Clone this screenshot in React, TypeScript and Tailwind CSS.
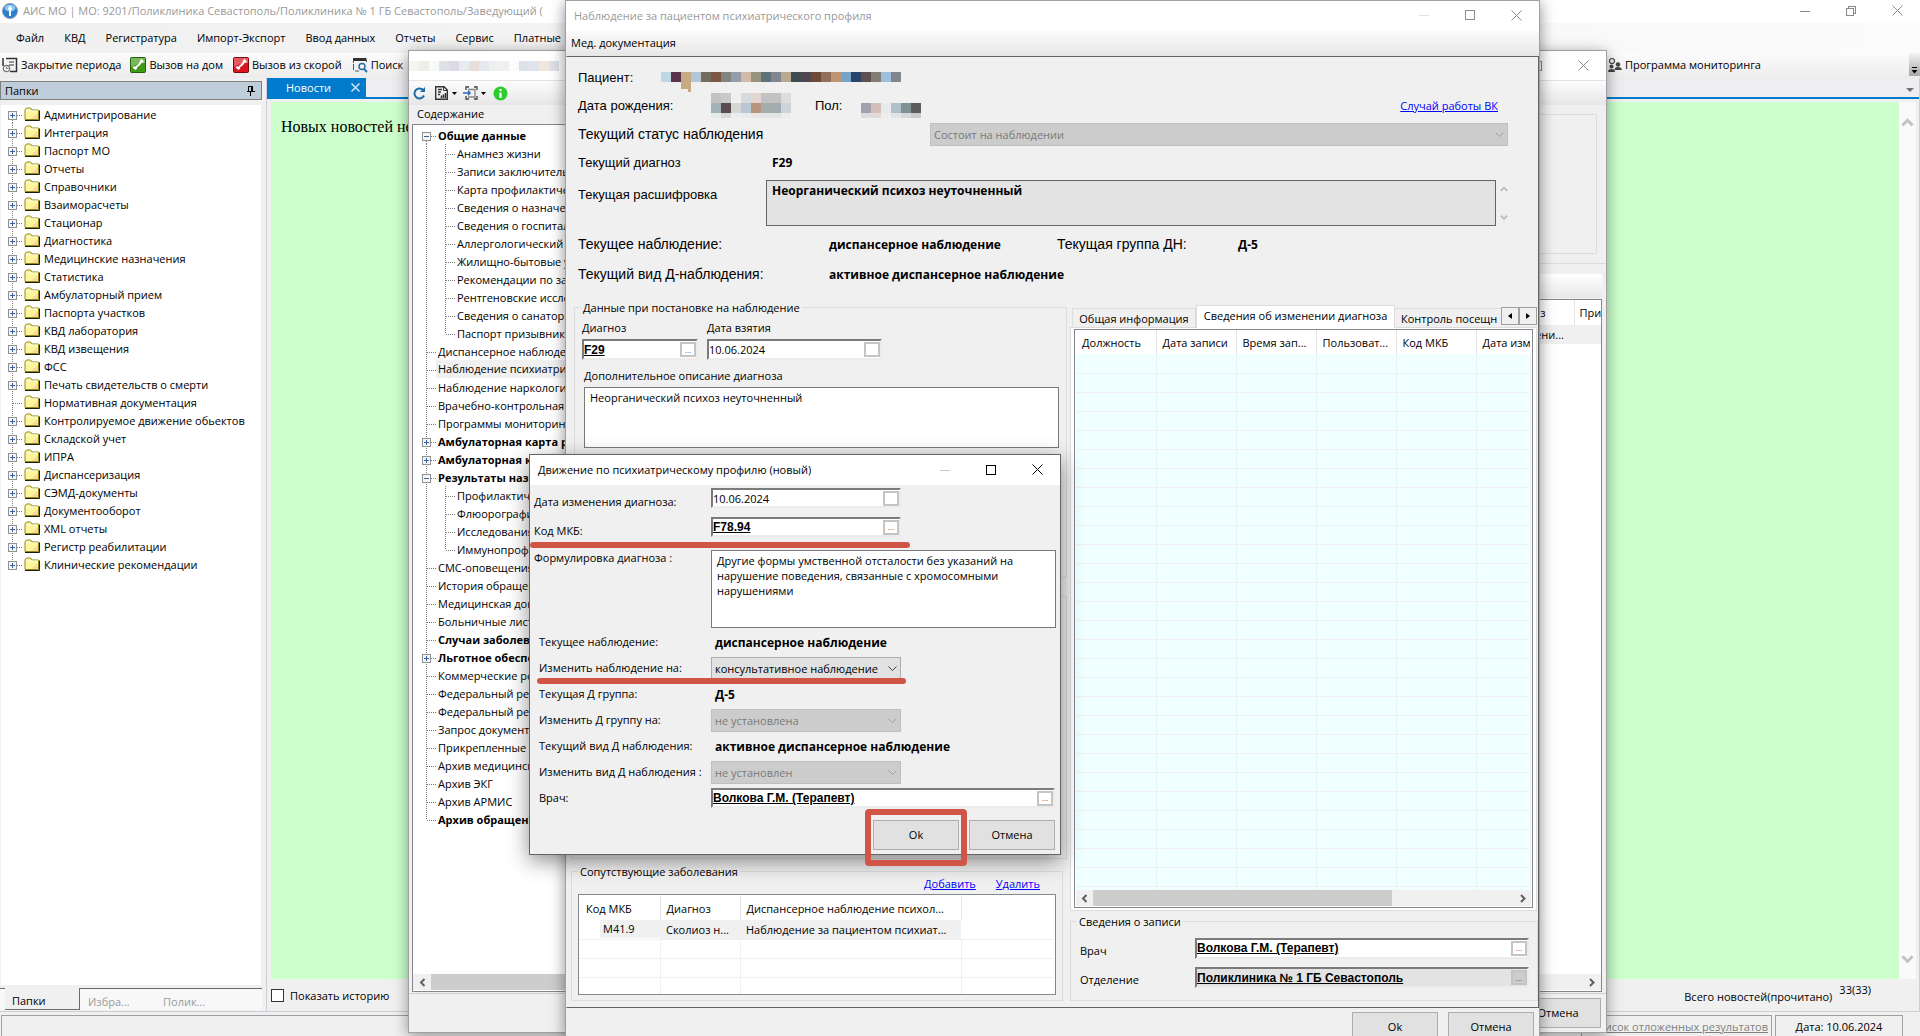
import type { ReactNode } from "react";
import clsx from "clsx";

const FOLDERS = [
  "Администрирование",
  "Интеграция",
  "Паспорт МО",
  "Отчеты",
  "Справочники",
  "Взаиморасчеты",
  "Стационар",
  "Диагностика",
  "Медицинские назначения",
  "Статистика",
  "Амбулаторный прием",
  "Паспорта участков",
  "КВД лаборатория",
  "КВД извещения",
  "ФСС",
  "Печать свидетельств о смерти",
  "Нормативная документация",
  "Контролируемое движение обьектов",
  "Складской учет",
  "ИПРА",
  "Диспансеризация",
  "СЭМД-документы",
  "Документооборот",
  "XML отчеты",
  "Регистр реабилитации",
  "Клинические рекомендации",
];

type Node = { label: string; bold?: boolean; box?: "plus" | "minus"; selected?: boolean; children?: string[] };

const CONTENTS: Node[] = [
  {
    label: "Общие данные",
    bold: true,
    box: "minus",
    children: [
      "Анамнез жизни",
      "Записи заключительных",
      "Карта профилактических",
      "Сведения о назначениях",
      "Сведения о госпитализации",
      "Аллергологический анамнез",
      "Жилищно-бытовые условия",
      "Рекомендации по занятиям",
      "Рентгеновские исследования",
      "Сведения о санаторном",
      "Паспорт призывника",
    ],
  },
  { label: "Диспансерное наблюдение" },
  { label: "Наблюдение психиатрическое", selected: true },
  { label: "Наблюдение наркологическое" },
  { label: "Врачебно-контрольная карта" },
  { label: "Программы мониторинга" },
  { label: "Амбулаторная карта ребенка", bold: true, box: "plus" },
  { label: "Амбулаторная карта", bold: true, box: "plus" },
  {
    label: "Результаты назначений",
    bold: true,
    box: "minus",
    children: ["Профилактические", "Флюорография", "Исследования", "Иммунопрофилактика"],
  },
  { label: "СМС-оповещения" },
  { label: "История обращений" },
  { label: "Медицинская документация" },
  { label: "Больничные листы" },
  { label: "Случаи заболеваний", bold: true },
  { label: "Льготное обеспечение", bold: true, box: "plus" },
  { label: "Коммерческие реестры" },
  { label: "Федеральный регистр" },
  { label: "Федеральный регистр" },
  { label: "Запрос документов" },
  { label: "Прикрепленные файлы" },
  { label: "Архив медицинский" },
  { label: "Архив ЭКГ" },
  { label: "Архив АРМИС" },
  { label: "Архив обращений", bold: true },
];

const NAME_CELLS = [
  "bg-[#bfd6e4]", "bg-[#58344c]", "bg-[#c7a984]", "bg-[#b3c5d6]", "bg-[#756c60]", "bg-[#7c5543]",
  "bg-[#80857d]", "bg-[#949eaa]", "bg-[#d3b9a7]", "bg-[#97937d]", "bg-[#5f7279]", "bg-[#81858f]",
  "bg-[#b9a993]", "bg-[#3f4c52]", "bg-[#524750]", "bg-[#6e4938]", "bg-[#90705a]", "bg-[#bd9672]",
  "bg-[#76a3c7]", "bg-[#27456a]", "bg-[#5f4d50]", "bg-[#827d74]", "bg-[#a0bfdf]", "bg-[#81858f]",
];
const BIRTH_TOP = ["bg-[#c2c2c2]", "bg-[#c9c9c9]", "bg-[#f2f0ed]", "bg-[#d6dade]", "bg-[#e2d6d1]", "bg-[#c2c2c2]", "bg-[#c2c2c2]", "bg-[#dcdcdc]"];
const BIRTH_MID = ["bg-[#9fb2b8]", "bg-[#5b4a50]", "bg-[#d5d8d3]", "bg-[#b9c6d4]", "bg-[#b8937b]", "bg-[#a4acac]", "bg-[#a2acb2]", "bg-[#ccd5da]"];
const BIRTH_LOW = ["bg-[#e6eaeb]", "bg-[#d9d9d9]", "bg-[#ebeceb]", "bg-[#e8eaec]", "bg-[#eae5e2]", "bg-[#e4e6e6]", "bg-[#e4e6e6]", "bg-[#ebecec]"];
const SEX_MID = ["bg-[#a0a0ae]", "bg-[#d3c1b9]", "bg-[#e8eaed]", "bg-[#b0c0ca]", "bg-[#819093]", "bg-[#5b5c5e]"];
const SEX_LOW = ["bg-[#dcdce0]", "bg-[#e2dad6]", "bg-[#eeeeee]", "bg-[#dfe4e8]", "bg-[#d6dadb]", "bg-[#cbcbcb]"];
const TITLE_CELLS = [
  "bg-[#f6f5f0]", "bg-[#efefea]", "bg-[#f8f9f9]", "bg-[#dfe0e8]", "bg-[#dcdae6]", "bg-[#e6ecf0]", "bg-[#e9dfda]",
  "bg-[#e6e8ef]", "bg-[#eef0f0]", "bg-[#f0f0f0]", "bg-[#fbfbfb]", "bg-[#dde1e9]", "bg-[#e0e3ec]", "bg-[#f1e6dd]", "bg-[#dedfe8]",
];

const CHANGE_COLUMNS = ["Должность", "Дата записи", "Время зап...", "Пользоват...", "Код МКБ", "Дата изм"];

function Mosaic({ cells, low }: { cells: string[]; low?: boolean }) {
  return (
    <div className="flex">
      {cells.map((cell, i) => (
        <span key={i} className={clsx("w-[10px]", low ? "h-[5px]" : "h-[10px]", cell)} />
      ))}
    </div>
  );
}

function Branch({ box, first, last, line }: { box?: "plus" | "minus"; first?: boolean; last?: boolean; line?: boolean }) {
  return (
    <svg width="19" height="18" viewBox="0 0 19 18" className="shrink-0" shapeRendering="crispEdges">
      <g stroke="#7a7a7a" strokeDasharray="1 1" fill="none">
        <path d={`M7.5 ${first ? 9 : 0}V${last ? 10 : 18}`} />
        {!line && <path d="M8 10.5H17" />}
      </g>
      {box && (
        <g>
          <rect x="3.5" y="6.5" width="8" height="8" rx="1" fill="#f6f6f6" stroke="#919191" />
          <path d={box === "plus" ? "M5 10.5H10M7.5 8V13" : "M5 10.5H10"} stroke="#3b5ea8" />
        </g>
      )}
    </svg>
  );
}

function Folder() {
  return (
    <svg width="16" height="14" viewBox="0 0 16 14" className="shrink-0">
      <path d="M1 12.500V3L2.500 1H6.500L8 3H14.500V12.500Z" fill="#fdf59a" stroke="#8f8a1c" />
      <path d="M2 4H14" stroke="#fffde0" />
      <path d="M7 12L14 6V12Z" fill="#fbd79a" />
      <path d="M1 13.500H15.500V3.500" fill="none" stroke="#1c1c08" />
    </svg>
  );
}

function Chevron({ dir, color = "#606060", size = 9 }: { dir: "up" | "down" | "left" | "right"; color?: string; size?: number }) {
  const d = {
    up: "M1 6.500L4.500 3L8 6.500",
    down: "M1 3L4.500 6.500L8 3",
    left: "M6.500 1L3 4.500L6.500 8",
    right: "M3 1L6.500 4.500L3 8",
  }[dir];
  return (
    <svg width={size} height={size} viewBox="0 0 9 9" className="shrink-0" fill="none" stroke={color} strokeWidth="2">
      <path d={d} />
    </svg>
  );
}

function WindowButtons({ color, minColor, restore }: { color: string; minColor: string; restore?: boolean }) {
  return (
    <div className="ml-auto flex shrink-0">
      <button aria-label="Свернуть" className="flex w-[46px] items-center justify-center">
        <svg width="10" height="10" viewBox="0 0 10 10" stroke={minColor} shapeRendering="crispEdges">
          <path d="M0 5.500H10" />
        </svg>
      </button>
      <button aria-label="Развернуть" className="flex w-[46px] items-center justify-center">
        <svg width="10" height="10" viewBox="0 0 10 10" fill="none" stroke={color} shapeRendering="crispEdges">
          {restore ? <path d="M.5 2.500H7.500V9.500H.5ZM2.500 2.500V.5H9.500V7.500H7.500" /> : <rect x=".5" y=".5" width="9" height="9" />}
        </svg>
      </button>
      <button aria-label="Закрыть" className="flex w-[46px] items-center justify-center">
        <svg width="11" height="11" viewBox="0 0 11 11" stroke={color}>
          <path d="M.5 .5L10.500 10.500M10.500 .5L.5 10.500" />
        </svg>
      </button>
    </div>
  );
}

function PushButton({ children }: { children: ReactNode }) {
  return (
    <button className="h-[30px] w-[86px] border border-[#adadad] bg-[#e1e1e1] pb-[2px] text-center">{children}</button>
  );
}

type FieldProps = { id: string; value: string; className?: string; bold?: boolean; disabled?: boolean; dots?: boolean };

function Field({ id, value, className, bold, disabled, dots }: FieldProps) {
  return (
    <div
      className={clsx(
        "flex items-center border-2 border-t-[#7b7b7b] border-r-[#ececec] border-b-[#ececec] border-l-[#7b7b7b]",
        disabled ? "bg-[#e3e3e3]" : "bg-white",
        className,
      )}
    >
      <input
        id={id}
        defaultValue={value}
        disabled={disabled}
        className={clsx("h-full min-w-0 flex-1 bg-transparent outline-none", bold && "font-['Liberation_Sans'] text-[12px] font-bold underline")}
      />
      <button
        aria-label="Выбрать"
        className={clsx(
          "flex h-[15px] w-[16px] shrink-0 items-center justify-center border-2 text-[8px] leading-none text-[#555]",
          disabled ? "border-[#c4c4c4] bg-[#cccccc]" : "border-[#c4c4c4] bg-white",
        )}
      >
        {dots && "..."}
      </button>
    </div>
  );
}

function Combo({ id, value, className, disabled }: { id: string; value: string; className?: string; disabled?: boolean }) {
  return (
    <div className={clsx("relative h-[23px]", className)}>
      <select
        id={id}
        disabled={disabled}
        className={clsx(
          "h-full w-full appearance-none border pl-[3px] opacity-100",
          disabled ? "border-[#bfbfbf] bg-[#cccccc] text-[#7a7a7a]" : "border-[#adadad] bg-[#e1e1e1]",
        )}
      >
        <option>{value}</option>
      </select>
      <svg
        width="9"
        height="6"
        viewBox="0 0 9 6"
        fill="none"
        stroke={disabled ? "#a0a0a0" : "#404040"}
        className="pointer-events-none absolute top-[9px] right-1"
      >
        <path d="M.5 .5L4.500 4.500L8.500 .5" />
      </svg>
    </div>
  );
}

function Group({ title, className, children }: { title: string; className?: string; children: ReactNode }) {
  return (
    <fieldset className={clsx("min-w-0 border border-[#dcdcdc]", className)}>
      <legend className="ml-[6px] px-[2px]">{title}</legend>
      {children}
    </fieldset>
  );
}

function CallIcon({ red }: { red?: boolean }) {
  return (
    <svg width="16" height="16" viewBox="0 0 16 16" className="shrink-0">
      <rect x=".5" y=".5" width="15" height="15" rx="1" fill={red ? "#d8141c" : "#3f9a16"} stroke={red ? "#7d0a10" : "#22610a"} />
      <path d="M1 1H15V6Q8 6 1 10Z" fill="#fff" opacity=".3" />
      <path d="M11.500 2L14 4.500L12.500 6L11.800 5.500Q10.500 8.500 7 10.500L7.200 11.500L5.500 13L2.500 10.500L4 9.200L5.500 9.400Q8.500 7.500 10 4.500L9.800 3.500Z" fill="#fff" />
    </svg>
  );
}

function MainToolbar() {
  return (
    <div className="flex h-[25px] shrink-0 items-center bg-gradient-to-b from-[#fcfcfc] to-[#ececec] pb-[2px] pl-[2px]">
      <button className="flex items-center gap-[3px]">
        <svg width="16" height="16" viewBox="0 0 16 16" fill="none" stroke="#333" strokeWidth="1.5">
          <path d="M1 1V9M4 1.500H14.500V14.500H8" />
          <path d="M7 5H12M7 8H12" strokeWidth="1.200" />
          <circle cx="4.500" cy="11.500" r="3.200" stroke="#777" strokeWidth="1.200" />
          <path d="M4.500 9.500V11.500H6.500" stroke="#777" strokeWidth="1" />
        </svg>
        Закрытие периода
      </button>
      <button className="ml-[9px] flex items-center gap-[3px]">
        <CallIcon />
        Вызов на дом
      </button>
      <button className="ml-[10px] flex items-center gap-[3px]">
        <CallIcon red />
        Вызов из скорой
      </button>
      <button className="ml-[10px] flex items-center gap-[3px]">
        <svg width="16" height="16" viewBox="0 0 16 16" fill="none">
          <path d="M1 2.500H14.500" stroke="#333" strokeWidth="3" />
          <path d="M1.500 3V6M14.500 3V5M1.500 7V13M3 14H7" stroke="#555" />
          <circle cx="10" cy="9.500" r="3" stroke="#2470a8" strokeWidth="1.500" />
          <path d="M12 12L15 15" stroke="#2470a8" strokeWidth="1.800" />
        </svg>
        Поиск
      </button>
      <button className="ml-auto flex items-center gap-[3px]">
        <svg width="16" height="16" viewBox="0 0 16 16" fill="#444">
          <circle cx="6" cy="4" r="2.500" fill="none" stroke="#444" strokeWidth="1.200" />
          <circle cx="5.500" cy="9.500" r="2" />
          <path d="M2 15Q2 12 5.500 12T9 15Z" />
          <circle cx="12" cy="7.500" r="2.200" />
          <path d="M8.500 13Q8.500 10 12 10T16 13Z" />
        </svg>
        Программа мониторинга
      </button>
      <button
        aria-label="Параметры панели"
        className="ml-[148px] flex h-full w-[11px] items-end justify-center bg-gradient-to-b from-[#f4f4f4] to-[#a8a8a8] pb-[2px]"
      >
        <svg width="7" height="7" viewBox="0 0 7 7">
          <path d="M1 .5H6" stroke="#000" />
          <path d="M.5 3H6.500L3.500 6.500Z" />
        </svg>
      </button>
    </div>
  );
}

function FoldersPanel() {
  return (
    <aside className="flex w-[262px] shrink-0 flex-col pt-[3px]">
      <div className="flex h-[19px] items-center justify-between border border-[#808080] bg-[#bfcddb] pr-[6px] pl-1">
        Папки
        <button aria-label="Закрепить">
          <svg width="8" height="10" viewBox="0 0 8 10" fill="none" stroke="#000" shapeRendering="crispEdges">
            <path d="M1.500 5.500V.5H5.500V5.500M0 5.500H8M3.500 6V10M4.500 0V5.500" />
          </svg>
        </button>
      </div>
      <ul className="mx-px mt-[5px] min-h-0 flex-1 overflow-hidden bg-white pl-1">
        {FOLDERS.map((name, i) => (
          <li key={name} className="flex h-[18px] items-center">
            <Branch box={name === "Нормативная документация" ? undefined : "plus"} first={i === 0} last={i === FOLDERS.length - 1} />
            <Folder />
            <span className="ml-1">{name}</span>
          </li>
        ))}
      </ul>
      <div className="mt-[3px] mb-px flex h-[22px] border-t border-[#6b6b6b] bg-[#f8f8f8] text-[#9a9a9a]">
        <button className="-mt-px ml-[5px] w-[75px] border-r border-b border-[#6b6b6b] bg-[#f0f0f0] pt-1 pl-[7px] text-left text-black">Папки</button>
        <button className="w-[75px] pt-1 pl-2 text-left">Избра...</button>
        <button className="w-[75px] pt-1 pl-2 text-left">Полик...</button>
      </div>
    </aside>
  );
}

function NewsArea() {
  return (
    <section className="ml-1 flex min-w-0 flex-1 flex-col border-r border-l border-[#ccced9]">
      <div className="flex h-[21px] shrink-0 items-start justify-between border-b-2 border-[#007acc] bg-[#eeedf2]">
        <div className="flex h-[19px] w-[99px] items-center justify-between bg-[#007acc] pr-[6px] pl-[19px] text-white">
          Новости
          <button aria-label="Закрыть вкладку">
            <svg width="9" height="9" viewBox="0 0 9 9" stroke="#cfe6f7" strokeWidth="1.500">
              <path d="M.5 .5L8.500 8.500M8.500 .5L.5 8.500" />
            </svg>
          </button>
        </div>
        <button aria-label="Список вкладок" className="mt-[10px] mr-[5px]">
          <svg width="8" height="4" viewBox="0 0 8 4" fill="#717171">
            <path d="M0 0H8L4 4Z" />
          </svg>
        </button>
      </div>
      <div className="mt-[3px] mr-[3px] ml-1 flex min-h-0 flex-1">
        <div className="flex-1 bg-[#ccffcc] px-[10px] pt-4 font-['Liberation_Serif'] text-[16px] leading-[18px]">Новых новостей нет</div>
        <div className="flex w-[17px] flex-col items-center justify-between bg-[#fafafa] py-[14px]">
          <Chevron dir="up" color="#c2c2c2" size={13} />
          <Chevron dir="down" color="#c2c2c2" size={13} />
        </div>
      </div>
      <div className="flex h-[32px] shrink-0 items-center pr-[48px] pl-1">
        <input id="history" type="checkbox" className="h-[13px] w-[13px] appearance-none border border-[#333] bg-white" />
        <label htmlFor="history" className="ml-[6px]">
          Показать историю
        </label>
        <span className="ml-auto pt-[2px]">Всего новостей(прочитано)</span>
        <span className="ml-[7px] pb-[12px]">33(33)</span>
      </div>
    </section>
  );
}

function ContentsTree() {
  return (
    <ul className="flex-1 overflow-hidden pt-px pl-[6px] whitespace-nowrap">
      {CONTENTS.map((node, i) => (
        <li key={i}>
          <div className="flex h-[18px] items-center">
            <Branch box={node.box} first={i === 0} last={i === CONTENTS.length - 1} />
            <span className={clsx("-ml-[2px] flex-1 pl-[2px]", node.bold && "font-bold", node.selected && "bg-[#f0f0f0] leading-[18px]")}>
              {node.label}
            </span>
          </div>
          {node.children && (
            <ul>
              {node.children.map((child, j) => (
                <li key={child} className="flex h-[18px] items-center">
                  <Branch line />
                  <Branch last={j === node.children!.length - 1} />
                  {child}
                </li>
              ))}
            </ul>
          )}
        </li>
      ))}
    </ul>
  );
}

function CardWindow() {
  return (
    <section className="absolute top-[50px] right-[313px] bottom-[3px] left-[408px] flex flex-col border border-[#a0a0a0] bg-[#f0f0f0] shadow-[0_3px_14px_rgba(0,0,0,0.4)]">
      <header className="flex h-[30px] shrink-0 border-b border-[#e3e3e3] bg-white">
        <div className="pt-[10px]">
          <Mosaic cells={TITLE_CELLS} />
        </div>
        <WindowButtons color="#8a8a8a" minColor="#8a8a8a" />
      </header>
      <div className="flex h-[24px] shrink-0 items-center bg-gradient-to-b from-[#fcfcfc] to-[#e6e6e6] pl-1">
        <button aria-label="Обновить">
          <svg width="13" height="13" viewBox="0 0 13 13" fill="none" stroke="#1c6ca8" strokeWidth="2">
            <path d="M10.500 3.500A5 5 0 1 0 11 8.500" />
            <path d="M12 0V5H7Z" fill="#1c6ca8" stroke="none" />
          </svg>
        </button>
        <button aria-label="Отчеты" className="ml-[9px] flex items-center gap-1">
          <svg width="13" height="14" viewBox="0 0 13 14" fill="none" stroke="#333">
            <path d="M.7 .7H9L12.300 4V13.300H.7Z" strokeWidth="1.400" />
            <path d="M8.500 1V4.500H12" />
            <path d="M3 3.500H7M3 6H6M3 8.500H5M6.500 12V9.500M8.500 12V8.500M10.500 12V7" strokeWidth="1.500" />
          </svg>
          <svg width="5" height="3" viewBox="0 0 5 3">
            <path d="M0 0H5L2.500 3Z" />
          </svg>
        </button>
        <button aria-label="Переход" className="ml-[6px] flex items-center gap-[3px]">
          <svg width="15" height="14" viewBox="0 0 15 14" fill="none" stroke="#444" strokeWidth="1.300">
            <path d="M3 4V1H6M11 1H14V4M14 10V13H11M6 13H3V10" />
            <path d="M5 3.500H12V11H5" stroke="#888" />
            <path d="M0 7H7M5 4.800L7.200 7L5 9.200" stroke="#2f66b0" />
          </svg>
          <svg width="5" height="3" viewBox="0 0 5 3">
            <path d="M0 0H5L2.500 3Z" />
          </svg>
        </button>
        <button aria-label="Информация" className="ml-[7px]">
          <svg width="15" height="15" viewBox="0 0 15 15">
            <circle cx="7.500" cy="7.500" r="7" fill="#2ecc2e" />
            <path d="M7.500 3V5M7.500 6.500V12" stroke="#fff" strokeWidth="2.200" />
          </svg>
        </button>
      </div>
      <div className="flex min-h-0 flex-1 border-b border-[#d0d0d0]">
        <div className="flex w-[300px] flex-col pb-px pl-[3px]">
          <div className="flex h-[19px] shrink-0 items-center pb-[2px] pl-[5px]">Содержание</div>
          <div className="flex min-h-0 flex-1 flex-col border border-[#828790] bg-white">
            <ContentsTree />
            <div className="mb-px flex h-[16px] shrink-0 bg-[#f0f0f0]">
              <button aria-label="Влево" className="flex w-[18px] items-center justify-center">
                <Chevron dir="left" />
              </button>
              <span className="flex-1 bg-[#cdcdcd]" />
            </div>
          </div>
        </div>
        <div className="flex min-w-0 flex-1 flex-col">
          <div className="mt-[9px] mr-[9px] h-[140px] shrink-0 border border-[#dcdcdc]" />
          <div className="mt-[9px] flex min-h-0 flex-1 flex-col border-t border-[#dcdcdc] pt-[10px] pr-1 pb-px">
            <div className="h-[24px] shrink-0 bg-gradient-to-b from-white to-[#e8e8e8]" />
            <div className="mt-px flex min-h-0 flex-1 flex-col border border-[#828790] bg-white">
              <table className="w-full table-fixed">
                <thead>
                  <tr className="h-[25px] text-left">
                    <th className="border-r border-[#e5e5e5] pr-[28px] text-right font-normal">Диагноз</th>
                    <th className="w-[27px] overflow-hidden pl-[5px] font-normal whitespace-nowrap">При</th>
                  </tr>
                </thead>
                <tbody>
                  <tr className="h-[19px] bg-[#f0f0f0]">
                    <td className="pr-[10px] text-right">Наблюдени...</td>
                    <td />
                  </tr>
                </tbody>
              </table>
              <div className="mt-auto mb-px flex h-[16px] shrink-0 items-center justify-end bg-[#f0f0f0] pr-[5px]">
                <Chevron dir="right" />
              </div>
            </div>
          </div>
        </div>
      </div>
      <footer className="flex h-[38px] shrink-0 items-center justify-end pr-[5px]">
        <PushButton>Отмена</PushButton>
      </footer>
    </section>
  );
}

function StatusRow({ label, value, children }: { label: string; value: string; children?: ReactNode }) {
  return (
    <div className="flex h-[30px] items-center">
      <span className="w-[251px] font-['Liberation_Sans'] text-[14px]">{label}</span>
      <b className="w-[228px] text-[12px] whitespace-nowrap">{value}</b>
      {children}
    </div>
  );
}

function PatientSummary() {
  return (
    <div className="shrink-0 pt-[6px] pl-[11px]">
      <div className="flex h-[28px] items-center">
        <span className="w-[83px] font-['Liberation_Sans'] text-[13px]">Пациент:</span>
        <div className="relative">
          <Mosaic cells={NAME_CELLS} />
          <span className="absolute top-[10px] left-5 h-[7px] w-[10px] bg-[#c7a984]" />
          <span className="absolute top-[17px] left-[27px] h-[3px] w-[3px] bg-[#c7a984]" />
        </div>
      </div>
      <div className="flex h-[28px] items-center">
        <span className="w-[133px] font-['Liberation_Sans'] text-[13px]">Дата рождения:</span>
        <div>
          <Mosaic cells={BIRTH_TOP} />
          <Mosaic cells={BIRTH_MID} />
          <Mosaic cells={BIRTH_LOW} low />
        </div>
        <span className="ml-6 w-[46px] font-['Liberation_Sans'] text-[13px]">Пол:</span>
        <div className="pt-[10px]">
          <Mosaic cells={SEX_MID} />
          <Mosaic cells={SEX_LOW} low />
        </div>
        <a href="#vk" className="mr-[40px] ml-auto text-[#0000ff] underline">
          Случай работы ВК
        </a>
      </div>
      <div className="flex h-[30px] items-center">
        <label htmlFor="status" className="w-[352px] font-['Liberation_Sans'] text-[14px]">
          Текущий статус наблюдения
        </label>
        <Combo id="status" value="Состоит на наблюдении" disabled className="mr-[30px] flex-1" />
      </div>
      <div className="flex h-[28px] items-center pb-[2px]">
        <span className="w-[194px] font-['Liberation_Sans'] text-[13px]">Текущий диагноз</span>
        <b className="text-[12px]">F29</b>
      </div>
      <div className="flex h-[52px] items-center">
        <label htmlFor="decoding" className="w-[188px] self-start pt-[10px] font-['Liberation_Sans'] text-[13px]">
          Текущая расшифровка
        </label>
        <textarea
          id="decoding"
          readOnly
          className="h-[46px] min-w-0 flex-1 resize-none border border-[#646464] bg-[#e3e3e3] px-[5px] py-[2px] text-[12px] font-bold"
          defaultValue="Неорганический психоз неуточненный"
        />
        <div className="mr-[30px] ml-1 flex flex-col gap-[20px]">
          <Chevron dir="up" color="#b8b8b8" size={8} />
          <Chevron dir="down" color="#b8b8b8" size={8} />
        </div>
      </div>
      <StatusRow label="Текущее наблюдение:" value="диспансерное наблюдение">
        <span className="w-[181px] font-['Liberation_Sans'] text-[14px]">Текущая группа ДН:</span>
        <b className="text-[12px]">Д-5</b>
      </StatusRow>
      <StatusRow label="Текущий вид Д-наблюдения:" value="активное диспансерное наблюдение" />
    </div>
  );
}

function IntakeGroup() {
  return (
    <Group title="Данные при постановке на наблюдение" className="ml-[3px] h-[278px] shrink-0">
      <div className="px-[7px] pt-[5px]">
        <div className="flex gap-[9px]">
          <div className="w-[116px]">
            <label htmlFor="diagnosis">Диагноз</label>
            <Field id="diagnosis" value="F29" bold dots className="mt-1 h-[21px]" />
          </div>
          <div className="w-[175px]">
            <label htmlFor="taken">Дата взятия</label>
            <Field id="taken" value="10.06.2024" className="mt-1 h-[21px]" />
          </div>
        </div>
        <div className="pt-2 pl-[2px]">
          <label htmlFor="description" className="block">
            Дополнительное описание диагноза
          </label>
          <textarea
            id="description"
            className="mt-1 block h-[61px] w-full resize-none border border-[#7a7a7a] bg-white px-[5px] py-[2px]"
            defaultValue="Неорганический психоз неуточненный"
          />
        </div>
      </div>
    </Group>
  );
}

function ComorbidGroup() {
  return (
    <Group title="Сопутствующие заболевания" className="mt-[5px] mr-1 shrink-0">
      <div className="px-[6px] pb-[5px]">
        <div className="flex h-[15px] items-center justify-end gap-5 pr-4 pb-[7px]">
          <a href="#add" className="text-[#0000ff] underline">
            Добавить
          </a>
          <a href="#remove" className="text-[#0000ff] underline">
            Удалить
          </a>
        </div>
        <div className="h-[101px] overflow-hidden border border-[#828790] bg-white p-px">
          <table className="w-full table-fixed border-collapse">
            <thead>
              <tr className="h-[24px] text-left">
                <th className="w-[80px] border-r border-[#e5e5e5] pl-[6px] font-normal">Код МКБ</th>
                <th className="w-[80px] border-r border-[#e5e5e5] pl-[6px] font-normal">Диагноз</th>
                <th className="w-[221px] border-r border-[#e5e5e5] pl-[6px] font-normal whitespace-nowrap">Диспансерное наблюдение психол...</th>
                <th />
              </tr>
            </thead>
            <tbody>
              <tr className="h-[19px] border-b border-[#f0f0f0] whitespace-nowrap">
                <td className="pl-[20px]">
                  <span className="block bg-[#f0f0f0] pl-[3px] leading-[18px]">M41.9</span>
                </td>
                <td className="bg-[#f0f0f0] pl-[6px]">Сколиоз н...</td>
                <td className="bg-[#f0f0f0] pl-[6px]">Наблюдение за пациентом психиат...</td>
                <td />
              </tr>
              {[0, 1, 2].map((i) => (
                <tr key={i} className="h-[19px] border-b border-[#f0f0f0]">
                  <td className="border-r border-[#f0f0f0]" />
                  <td className="border-r border-[#f0f0f0]" />
                  <td className="border-r border-[#f0f0f0]" />
                  <td />
                </tr>
              ))}
            </tbody>
          </table>
        </div>
      </div>
    </Group>
  );
}

function ChangesPane() {
  return (
    <div className="flex min-w-0 flex-1 flex-col pt-[5px]">
      <div className="relative z-10 -mb-px ml-[2px] flex h-[23px] shrink-0 items-end whitespace-nowrap">
        <button className="h-[20px] w-[124px] shrink-0 border border-b-0 border-[#dcdcdc]">Общая информация</button>
        <button className="h-[23px] w-[199px] shrink-0 border border-b-0 border-[#dcdcdc] bg-white pb-1">Сведения об изменении диагноза</button>
        <button className="h-[20px] min-w-0 flex-1 overflow-hidden border-t border-[#dcdcdc] pl-[6px] text-left">Контроль посещн</button>
        <div className="mb-[3px] flex shrink-0 self-end pr-px">
          <button aria-label="Назад" className="flex h-[18px] w-[18px] items-center justify-center border border-[#a0a0a0]">
            <svg width="4" height="6" viewBox="0 0 4 6">
              <path d="M4 0V6L0 3Z" />
            </svg>
          </button>
          <button aria-label="Вперед" className="flex h-[18px] w-[18px] items-center justify-center border border-[#a0a0a0]">
            <svg width="4" height="6" viewBox="0 0 4 6">
              <path d="M0 0V6L4 3Z" />
            </svg>
          </button>
        </div>
      </div>
      <div className="mr-px flex min-h-0 flex-1 flex-col border border-[#dcdcdc] bg-white px-[3px] pt-px pb-[2px]">
        <div className="flex min-h-0 flex-1 flex-col border border-[#828790] px-px">
          <div className="min-h-0 flex-1 overflow-hidden">
            <table className="w-full table-fixed border-collapse bg-[#f0ffff]">
              <thead>
                <tr className="h-[24px] bg-white text-left whitespace-nowrap">
                  {CHANGE_COLUMNS.map((name, i) => (
                    <th key={name} className={clsx("overflow-hidden pl-[6px] font-normal", i < 5 && "w-[80px] border-r border-[#e5e5e5]")}>
                      {name}
                    </th>
                  ))}
                </tr>
              </thead>
              <tbody>
                {Array.from({ length: 29 }, (_, row) => (
                  <tr key={row} className="h-[19px] border-b border-[#f0f0f0]">
                    {CHANGE_COLUMNS.map((name) => (
                      <td key={name} className="border-r border-[#f0f0f0]" />
                    ))}
                  </tr>
                ))}
              </tbody>
            </table>
          </div>
          <div className="mb-px flex h-[16px] shrink-0 items-center bg-[#f0f0f0]">
            <button aria-label="Влево" className="flex w-[17px] justify-center">
              <Chevron dir="left" />
            </button>
            <div className="flex h-full flex-1">
              <span className="w-[71%] bg-[#cdcdcd]" />
            </div>
            <button aria-label="Вправо" className="flex w-[17px] justify-center">
              <Chevron dir="right" />
            </button>
          </div>
        </div>
      </div>
      <Group title="Сведения о записи" className="mt-[3px] h-[87px] shrink-0">
        <div className="flex h-[34px] items-center pt-1 pr-[8px] pl-[9px]">
          <label htmlFor="doctor" className="w-[115px] pt-1">
            Врач
          </label>
          <Field id="doctor" value="Волкова Г.М. (Терапевт)" bold dots className="h-[21px] flex-1" />
        </div>
        <div className="flex h-[30px] items-center pr-[8px] pb-px pl-[9px]">
          <label htmlFor="department" className="w-[115px] pt-1">
            Отделение
          </label>
          <Field id="department" value="Поликлиника № 1 ГБ Севастополь" bold disabled dots className="h-[21px] flex-1" />
        </div>
      </Group>
    </div>
  );
}

function ObservationWindow() {
  return (
    <section className="absolute top-0 right-[380px] bottom-0 left-[565px] flex flex-col border border-b-0 border-[#a0a0a0] bg-[#f0f0f0] shadow-[0_3px_14px_rgba(0,0,0,0.45)]">
      <header className="flex h-[30px] shrink-0 items-stretch bg-white pb-[2px] pl-2">
        <h2 className="self-center text-[#999]">Наблюдение за пациентом психиатрического профиля</h2>
        <WindowButtons color="#8a8a8a" minColor="#e2e2e2" />
      </header>
      <nav className="flex h-[25px] shrink-0 items-center bg-gradient-to-b from-[#fbfbfb] to-[#e6e6e6] pb-[2px] pl-[5px]">
        <button>Мед. документация</button>
      </nav>
      <div className="flex min-h-0 flex-1 flex-col border border-[#646464] border-l-[#f0f0f0]">
        <PatientSummary />
        <div className="mt-[11px] flex min-h-0 flex-1 pb-[6px] pl-1">
          <div className="mr-[3px] flex w-[496px] shrink-0 flex-col">
            <IntakeGroup />
            <div className="mt-[18px] min-h-0 flex-1 border border-[#dcdcdc]" />
            <ComorbidGroup />
          </div>
          <ChangesPane />
        </div>
      </div>
      <footer className="flex h-[28px] shrink-0 gap-[10px] self-end overflow-hidden pt-1 pr-[5px]">
        <PushButton>Ok</PushButton>
        <PushButton>Отмена</PushButton>
      </footer>
    </section>
  );
}

function MoveRow({ label, htmlFor, children }: { label: string; htmlFor?: string; children: ReactNode }) {
  return (
    <div className="flex h-[26px] items-center pr-[5px] pl-[9px]">
      {htmlFor ? (
        <label htmlFor={htmlFor} className="w-[172px] shrink-0 pb-[2px]">
          {label}
        </label>
      ) : (
        <span className="w-[172px] shrink-0 pb-[2px]">{label}</span>
      )}
      {children}
    </div>
  );
}

function MoveDialog() {
  return (
    <section className="absolute top-[454px] left-[529px] w-[532px] border border-[#646464] bg-[#f0f0f0] shadow-[0_6px_20px_rgba(0,0,0,0.45)]">
      <header className="flex h-[30px] bg-white pb-px pl-2">
        <h2 className="self-center">Движение по психиатрическому профилю (новый)</h2>
        <WindowButtons color="#000" minColor="#c8c8c8" />
      </header>
      <div className="flex h-[29px] pt-[3px] pl-1">
        <label htmlFor="changed" className="w-[177px] pt-[6px]">
          Дата изменения диагноза:
        </label>
        <Field id="changed" value="10.06.2024" className="h-[20px] w-[190px]" />
      </div>
      <div className="flex h-[29px] pt-[3px] pl-1">
        <label htmlFor="icd" className="w-[177px] pt-[6px]">
          Код МКБ:
        </label>
        <Field id="icd" value="F78.94" bold dots className="h-[20px] w-[190px]" />
      </div>
      <div className="flex h-[86px] pt-[7px] pr-1 pl-1">
        <label htmlFor="wording" className="w-[177px]">
          Формулировка диагноза :
        </label>
        <textarea
          id="wording"
          className="h-[78px] min-w-0 flex-1 resize-none border border-[#7a7a7a] bg-white px-[5px] py-[2px]"
          defaultValue={"Другие формы умственной отсталости без указаний на\nнарушение поведения, связанные с хромосомными\nнарушениями"}
        />
      </div>
      <MoveRow label="Текущее наблюдение:">
        <b className="pl-1 text-[12px]">диспансерное наблюдение</b>
      </MoveRow>
      <MoveRow label="Изменить наблюдение на:" htmlFor="observation">
        <Combo id="observation" value="консультативное наблюдение" className="w-[190px]" />
      </MoveRow>
      <MoveRow label="Текущая Д группа:">
        <b className="pl-1 text-[12px]">Д-5</b>
      </MoveRow>
      <MoveRow label="Изменить Д группу на:" htmlFor="group">
        <Combo id="group" value="не установлена" disabled className="w-[190px]" />
      </MoveRow>
      <MoveRow label="Текущий вид Д наблюдения:">
        <b className="pl-1 text-[12px]">активное диспансерное наблюдение</b>
      </MoveRow>
      <MoveRow label="Изменить вид Д наблюдения :" htmlFor="kind">
        <Combo id="kind" value="не установлен" disabled className="w-[190px]" />
      </MoveRow>
      <MoveRow label="Врач:" htmlFor="physician">
        <Field id="physician" value="Волкова Г.М. (Терапевт)" bold dots className="h-[20px] flex-1" />
      </MoveRow>
      <div className="flex justify-end gap-[10px] pt-[9px] pr-[5px] pb-1">
        <div className="relative">
          <PushButton>Ok</PushButton>
          <span className="absolute -top-[11px] -right-2 -bottom-4 -left-2 rounded-sm border-[6px] border-[#d15547]" />
        </div>
        <PushButton>Отмена</PushButton>
      </div>
      <span className="absolute top-[87px] left-0 h-[6px] w-[380px] rounded-full bg-[#d15547]" />
      <span className="absolute top-[223px] left-[7px] h-[6px] w-[369px] rounded-full bg-[#d15547]" />
    </section>
  );
}

export default function App() {
  return (
    <div className="relative flex h-screen flex-col overflow-hidden bg-[#f0f0f0] font-['Open_Sans',sans-serif] text-[11px] leading-[15px] text-black">
      <header className="flex h-[23px] shrink-0 bg-white pb-[2px] pl-[2px]">
        <svg width="16" height="16" viewBox="0 0 16 16" className="mt-[3px] shrink-0">
          <circle cx="8" cy="8" r="7.500" fill="#2a7fd0" stroke="#8a9aa8" />
          <ellipse cx="8" cy="5" rx="5.500" ry="3.500" fill="#8cc8f4" />
          <path d="M8 3V13M6 5.500H10" stroke="#fff" strokeWidth="2" />
        </svg>
        <h1 className="ml-[5px] self-center whitespace-nowrap text-[#999]">
          АИС МО | МО: 9201/Поликлиника Севастополь/Поликлиника № 1 ГБ Севастополь/Заведующий (
        </h1>
        <WindowButtons color="#8a8a8a" minColor="#8a8a8a" restore />
      </header>
      <nav className="flex h-[30px] shrink-0 items-center gap-[20px] bg-gradient-to-r from-[#f0f0f0] to-[#fbfbfb] pb-[2px] pl-4">
        {["Файл", "КВД", "Регистратура", "Импорт-Экспорт", "Ввод данных", "Отчеты", "Сервис", "Платные"].map((item) => (
          <button key={item}>{item}</button>
        ))}
      </nav>
      <MainToolbar />
      <main className="flex min-h-0 flex-1 border-b border-[#ccced9]">
        <FoldersPanel />
        <NewsArea />
      </main>
      <footer className="flex h-[24px] shrink-0 gap-[3px] pt-[3px] pr-[17px] pl-px">
        <div className="flex-1 border-t border-l border-[#a0a0a0]" />
        <div className="flex w-[191px] items-center justify-end border-t border-r border-l border-[#a0a0a0] pr-[3px] whitespace-nowrap">
          <a href="#postponed" className="text-[#808080] underline">
            Список отложенных результатов
          </a>
        </div>
        <div className="flex w-[128px] items-center justify-center border-t border-r border-l border-[#a0a0a0]">Дата: 10.06.2024</div>
      </footer>
      <CardWindow />
      <ObservationWindow />
      <MoveDialog />
    </div>
  );
}
